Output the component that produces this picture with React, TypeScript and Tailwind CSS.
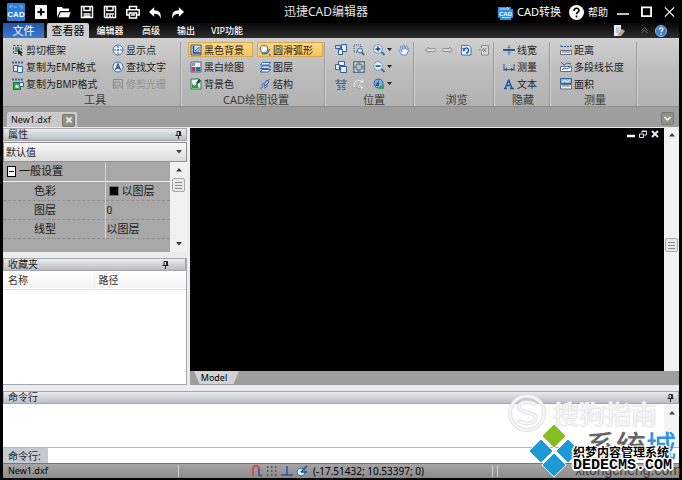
import { useState, type ReactNode } from "react"

type IconProps = { children: ReactNode; className?: string }

function Icon({ children, className = "w-3 h-3" }: IconProps) {
  return (
    <svg viewBox="0 0 12 12" className={`${className} shrink-0`} fill="none" stroke="#2a5faa" strokeWidth="1" aria-hidden="true">
      {children}
    </svg>
  )
}

const icons = {
  cutFrame: (
    <Icon>
      <path d="M1.5 1.5h8v8h-8z" stroke="#26406a" strokeDasharray="2 1.5" />
      <path d="M3 3h5v5H3z" fill="#3f9b6c" stroke="none" />
      <path d="M6 5l5 4-2 .3 1.5 2.4-1.4.3L7.6 9.7 6 11z" fill="#17243a" stroke="none" />
    </Icon>
  ),
  copyEmf: (
    <Icon>
      <path d="M0 1.5h11" stroke="#3c5f97" strokeWidth="2" strokeDasharray="2 1" />
      <path d="M1.5 4.5h5v6h-5z" fill="#dbe9fa" />
      <path d="M5.5 5.5h5v6h-5z" fill="#eef5ff" />
    </Icon>
  ),
  copyBmp: (
    <Icon>
      <path d="M0 1.5h11" stroke="#3c5f97" strokeWidth="2" strokeDasharray="2 1" />
      <path d="M1.5 4.5h7v7h-7z" fill="#36a552" stroke="#16763b" />
      <path d="M7.5 4.5h4v4h-4z" fill="#eef5ff" />
      <path d="M3.5 7v3h3V7z" fill="#e6f7e8" stroke="none" />
    </Icon>
  ),
  showPoint: (
    <Icon>
      <circle cx="6" cy="6" r="5" fill="#eef4fb" stroke="#476d98" />
      <path d="M6 2v2M6 8v2M2 6h2M8 6h2" />
      <circle cx="6" cy="6" r="1" fill="#234e90" stroke="none" />
    </Icon>
  ),
  findText: (
    <Icon>
      <circle cx="6" cy="6" r="5" fill="#eef4fb" stroke="#476d98" />
      <path d="M3.5 9L6 3l2.5 6M4.5 7h3" stroke="#1f4f9a" strokeWidth="1.3" />
    </Icon>
  ),
  trimRaster: (
    <Icon>
      <path d="M1.5 11V1.5h9V11M3 4h5v4H3zM8 8l3 3M2 10h5" stroke="#8b8b8b" />
    </Icon>
  ),
  blackBg: (
    <Icon>
      <path d="M1 1h10v10H1z" fill="#cddff1" stroke="#3c5674" />
      <path d="M3.5 2v7h7" stroke="#24415f" strokeWidth="1.5" />
      <path d="M5 7l4-4v4z" fill="#fff" stroke="#4272ad" />
    </Icon>
  ),
  blackWhite: (
    <Icon>
      <path d="M1 1h10v10H1z" fill="#f0f3f8" stroke="#52617b" />
      <path d="M1.5 6h4v4.5h-4z" fill="#b13a5b" stroke="none" />
      <path d="M6 6h4.5v4.5H6z" fill="#2f6f9a" stroke="none" />
      <path d="M2 2h3v3H2z" fill="#8396b5" stroke="none" />
    </Icon>
  ),
  bgColor: (
    <Icon>
      <path d="M1 1h8l2 2v8H1z" fill="#e4f4e6" stroke="#287946" />
      <path d="M2 10V5l2 3 3-3 2 5z" fill="#2b9a4c" stroke="none" />
      <path d="M6 5l3-4 2 2-3 3z" fill="#273f5f" stroke="none" />
    </Icon>
  ),
  arc: (
    <Icon>
      <circle cx="5" cy="5" r="3.8" fill="#fff" stroke="#52617b" />
      <path d="M3 9.500A5.500 5.500 0 0 0 10.500 5M10 10l1.500 1.500" stroke="#3574bd" strokeWidth="1.4" />
    </Icon>
  ),
  layers: (
    <Icon>
      <path d="M3.5 1.5h8l-2 2.5h-8zM3.5 5h8l-2 2.5h-8zM3.5 8.5h8l-2 2.5h-8z" fill="#eff6ff" />
    </Icon>
  ),
  structure: (
    <Icon>
      <path d="M1 10c2 1 3-1 2-3s3-2 3 0-2 3 0 3 3-3 2-5 2-3 3-4" stroke="#4673ad" />
      <path d="M5 6l3-4 2 2-4 4z" fill="#a4c4e9" />
    </Icon>
  ),
  copyView: (
    <Icon>
      <path d="M6.5 .5h5v7h-5z" fill="#e2effd" />
      <path d="M.5 1.5h5v3h-5z" fill="#c3dbf5" />
      <path d="M3.5 5.500h4v5h-4z" fill="#eaf3fe" stroke="#36567e" />
    </Icon>
  ),
  pageView: (
    <Icon>
      <path d="M3.5 .5h6v4h-6z" fill="#eef5ff" />
      <path d="M.5 3.5h4v5h-4zM5.5 5.5h6v6h-6z" fill="#dbe9f8" stroke="#385f8b" />
    </Icon>
  ),
  threeD: (
    <Icon>
      <path d="M0 3h12M3 1v5M9 1v5M1 5.500h10" stroke="#3b5f92" />
      <path d="M2 7.500h3v4H2M3 9.500h2M7.500 7.500H10M7.500 7.500v2H10v2H7" stroke="#3268a8" />
    </Icon>
  ),
  zoomArea: (
    <Icon>
      <path d="M1 1h7v7H1z" stroke="#344b70" strokeDasharray="1 1" />
      <circle cx="7" cy="6.500" r="2.5" fill="#deecfa" />
      <path d="M8.8 8.5l2.5 2.5" stroke="#344b70" strokeWidth="1.5" />
    </Icon>
  ),
  fit: (
    <Icon>
      <path d="M.5 .5h11v11H.5z" fill="#758d9a" stroke="#61727b" />
      <path d="M2 4.500V2h2.500M7.500 2H10v2.500M10 7.500V10H7.500M4.500 10H2V7.500" stroke="#edf5f7" />
      <path d="M4 4h4v4H4z" fill="#b4c0c6" stroke="none" />
    </Icon>
  ),
  rotate: (
    <Icon>
      <path d="M2 9a4 4 0 1 1 7-5M7 4h3V1M5 10h4M6 7l4 3" stroke="#f2f2f2" />
      <path d="M3 9a4 4 0 0 0 5 1" stroke="#969696" />
    </Icon>
  ),
  zoomIn: (
    <Icon>
      <circle cx="5" cy="5" r="4.300" fill="#e8f2fd" stroke="#6e97c6" />
      <path d="M2.500 5h5M5 2.500v5" stroke="#193f80" strokeWidth="1.5" />
      <path d="M8.5 8l3 3" strokeWidth="1.7" />
    </Icon>
  ),
  zoomOut: (
    <Icon>
      <circle cx="5" cy="5" r="4.300" fill="#e8f2fd" stroke="#6e97c6" />
      <path d="M2.500 5h5" stroke="#193f80" strokeWidth="1.5" />
      <path d="M8.5 8l3 3" strokeWidth="1.7" />
    </Icon>
  ),
  orbit: (
    <Icon>
      <circle cx="5.500" cy="5.500" r="4.5" fill="#86afd6" />
      <path d="M2 8l4-6v6z" fill="#245696" stroke="none" />
      <path d="M7 8l4-1v4H6z" fill="#35a44b" stroke="none" />
    </Icon>
  ),
  hand: (
    <Icon>
      <path d="M4 11L1 6.500c-.5-1 .8-1.300 1.500-.3L4 7.500 2.500 3c0-1 1.200-1.200 1.500 0l1 2.500L5 1.500c.3-1 1.300-.8 1.500 0L7 5l1-3c.5-.8 1.400-.3 1.200.5L8.800 6l1.200-1.500c.8-.5 1.300.2.900 1L8.500 11z" fill="#f3f8ff" stroke="#5f8cc4" />
    </Icon>
  ),
  back: (
    <Icon>
      <path d="M4.5 3L1.5 6l3 3V7.500H11v-3H4.5z" stroke="#929292" />
      <path d="M4 6h7" stroke="#eeeeee" />
    </Icon>
  ),
  forward: (
    <Icon>
      <path d="M7.5 3l3 3-3 3V7.500H1v-3h6.500z" stroke="#929292" />
      <path d="M1 6h7" stroke="#eeeeee" />
    </Icon>
  ),
  refreshPage: (
    <Icon>
      <path d="M1.5 1.5H9L11 3.500v7.500H1.500z" fill="#e8f1fd" stroke="#3a75bd" />
      <path d="M4 5.500c2-3 5-1 4.500 1.500C8.200 8.500 7 9 6 9" stroke="#215ca9" strokeWidth="1.5" />
      <path d="M2.5 3.500l.5 4 3-1.500z" fill="#215ca9" stroke="none" />
    </Icon>
  ),
  stopPage: (
    <Icon>
      <path d="M3.500 4V1.500h7v9.500h-7V8" fill="#d6d6d6" stroke="#8b8b8b" />
      <path d="M5 4l3 4M8 4L5 8M1 6h4" stroke="#777777" />
    </Icon>
  ),
  lineWidth: (
    <Icon>
      <path d="M0 6h12" stroke="#245696" strokeWidth="2" />
      <path d="M6 1v3M6 8v3M4.5 3L6 4.500 7.500 3M4.500 9L6 7.500 7.500 9" stroke="#4778b5" />
    </Icon>
  ),
  dimension: (
    <Icon>
      <path d="M1 3v7M11 3v7M1 8.500h10" stroke="#36567e" />
      <path d="M4 7L2 8.500 4 10M8 7l2 1.500L8 10" />
    </Icon>
  ),
  text: (
    <Icon>
      <path d="M1 10.500h3M7 10.500h4M2.500 10L5.500 2M5.500 1.500l3.500 9M3.800 7.500h4" stroke="#1d559e" strokeWidth="1.5" />
    </Icon>
  ),
  distance: (
    <Icon>
      <path d="M1 2.500h10M1 1v3M11 1v3" strokeDasharray="2 1" />
      <path d="M.5 6.500h11v4H.5z" fill="#f3f5f7" stroke="#5e6c7d" />
      <path d="M3 7v2M5 7v2M7 7v2M9 7v2" stroke="#5e6c7d" />
    </Icon>
  ),
  polyline: (
    <Icon>
      <path d="M1 1l3 3 3-2 4 1" />
      <path d="M.5 5.500h11v5H.5z" fill="#f3f5f7" stroke="#5e6c7d" />
      <path d="M2 9l2-2 3 1 3-2" />
    </Icon>
  ),
  area: (
    <Icon>
      <path d="M.5 .5h11v5H.5z" fill="#8eb4df" />
      <path d="M.5 6.500h11v4.500H.5z" fill="#f3f5f7" stroke="#5e6c7d" />
      <path d="M2 4l3-2 2 2 3-2" stroke="#fff" />
      <path d="M3 7v2M5 7v2M7 7v2M9 7v2" stroke="#5e6c7d" />
    </Icon>
  ),
}

type Command = { label: string; icon: ReactNode; active?: boolean; disabled?: boolean }

function CommandButton({ label, icon, active, disabled }: Command) {
  return (
    <button
      type="button"
      disabled={disabled}
      className={`flex items-center gap-[2px] h-[15px] pl-px pr-2 whitespace-nowrap border text-[10px] leading-[14px] ${
        active ? "border-[#d8a94c] bg-linear-to-b from-[#fbd68a] to-[#fcc559]" : "border-transparent"
      } ${disabled ? "text-[#929292]" : "text-[#1c1c1c]"}`}
    >
      {icon}
      {label}
    </button>
  )
}

function CommandColumn({ items, className = "" }: { items: Command[]; className?: string }) {
  return (
    <div className={`flex flex-col gap-[2px] ${className}`}>
      {items.map((c) => (
        <CommandButton key={c.label} {...c} />
      ))}
    </div>
  )
}

function IconButton({ label, icon, menu }: { label: string; icon: ReactNode; menu?: boolean }) {
  return (
    <button type="button" aria-label={label} className="flex items-center gap-[2px] h-[15px]">
      {icon}
      {menu && (
        <svg viewBox="0 0 5 3" className="w-[5px] h-[3px]" aria-hidden="true">
          <path d="M0 0h5L2.5 3z" fill="#222" />
        </svg>
      )}
    </button>
  )
}

function Group({ title, className, children }: { title: string; className: string; children: ReactNode }) {
  return (
    <section className={`flex flex-col shrink-0 border-r border-[#9b9b9b] shadow-[1px_0_0_#d2d2d2] ${className}`}>
      <div className="flex flex-1 items-start">{children}</div>
      <h2 className="text-center text-[11px] leading-3 text-[#3a3a3a]">{title}</h2>
    </section>
  )
}

function Pin() {
  return (
    <svg viewBox="0 0 7 8" className="w-[7px] h-2" fill="none" stroke="#222" aria-hidden="true">
      <path d="M2 .5h3.500V4.500M2 .5v4M4.500 1v3.500M.5 4.500h6M3.500 5v3" />
    </svg>
  )
}

function PanelHeader({ title, pinClass = "pr-1" }: { title: string; pinClass?: string }) {
  return (
    <header
      className={`flex items-center justify-between shrink-0 h-[13px] pl-1 border border-[#a4a7ad] bg-linear-to-b from-[#e9ecf0] to-[#b9bec6] ${pinClass}`}
    >
      <h2 className="text-[10px] leading-[11px] text-[#222]">{title}</h2>
      <button type="button" aria-label={`固定${title}`}>
        <Pin />
      </button>
    </header>
  )
}

function Arrow({ up }: { up?: boolean }) {
  return (
    <svg viewBox="0 0 6 4" className="w-[6px] h-1" aria-hidden="true">
      <path d={up ? "M0 3.5h6L3 0z" : "M0 0h6L3 3.5z"} fill="#3d3d3d" />
    </svg>
  )
}

function Thumb() {
  return (
    <div className="flex flex-col items-center justify-center gap-[2px] w-[13px] h-[14px] rounded-xs border border-[#a9a9a9] bg-[#e8e8e8]">
      <span className="w-[7px] h-px bg-[#8a8a8a]" />
      <span className="w-[7px] h-px bg-[#8a8a8a]" />
      <span className="w-[7px] h-px bg-[#8a8a8a]" />
    </div>
  )
}

const drawTools: Command[] = [
  { label: "剪切框架", icon: icons.cutFrame },
  { label: "复制为EMF格式", icon: icons.copyEmf },
  { label: "复制为BMP格式", icon: icons.copyBmp },
]
const findTools: Command[] = [
  { label: "显示点", icon: icons.showPoint },
  { label: "查找文字", icon: icons.findText },
  { label: "修剪光栅", icon: icons.trimRaster, disabled: true },
]
const colorSettings: Command[] = [
  { label: "黑色背景", icon: icons.blackBg, active: true },
  { label: "黑白绘图", icon: icons.blackWhite },
  { label: "背景色", icon: icons.bgColor },
]
const shapeSettings: Command[] = [
  { label: "圆滑弧形", icon: icons.arc, active: true },
  { label: "图层", icon: icons.layers },
  { label: "结构", icon: icons.structure },
]
const hideTools: Command[] = [
  { label: "线宽", icon: icons.lineWidth },
  { label: "测量", icon: icons.dimension },
  { label: "文本", icon: icons.text },
]
const measureTools: Command[] = [
  { label: "距离", icon: icons.distance },
  { label: "多段线长度", icon: icons.polyline },
  { label: "面积", icon: icons.area },
]

function TitleBar() {
  return (
    <header className="flex items-center justify-between h-[23px] pt-px px-1 text-white">
      <div className="flex flex-1 items-center gap-[9px]">
        <svg viewBox="0 0 18 18" className="w-[18px] h-[18px]" aria-label="CAD">
          <rect width="18" height="18" rx="1" fill="#2c7fd8" />
          <path d="M3 5V3h3M12 3h3v3M7 4h3" stroke="#8cc1f4" fill="none" />
          <text x="9" y="14" textAnchor="middle" fontSize="8" fontWeight="bold" fill="#fff" fontFamily="Liberation Sans, sans-serif">CAD</text>
        </svg>
        <button type="button" aria-label="新建">
          <svg viewBox="0 0 14 14" className="w-[14px] h-[14px]" fill="none" stroke="#fff" strokeWidth="2">
            <path d="M2 1h10v12H2z" fill="#eee" />
            <path d="M7 3.500v7M3.500 7h7" stroke="#111" />
          </svg>
        </button>
        <button type="button" aria-label="打开">
          <svg viewBox="0 0 14 14" className="w-[14px] h-[14px]" fill="#fff">
            <path d="M0 12V2h5l1 1.500h6V6H3z" />
            <path d="M3.500 7H14l-2 5.500H1z" stroke="#000" strokeWidth=".5" />
          </svg>
        </button>
        <button type="button" aria-label="保存">
          <svg viewBox="0 0 14 14" className="w-[14px] h-[14px]" fill="none" stroke="#fff" strokeWidth="1.5">
            <path d="M1.500 1.500h11v11h-11zM4 1.500v4h6v-4M3.500 9h7M3.500 11h7" />
          </svg>
        </button>
        <button type="button" aria-label="另存为">
          <svg viewBox="0 0 14 14" className="w-[14px] h-[14px]" fill="none" stroke="#fff" strokeWidth="1.5">
            <path d="M1.500 12.500v-11h11v11H1.500M4 1.500v4h6v-4M3 9h8" />
            <path d="M3 11h7" strokeDasharray="2 1" />
          </svg>
        </button>
        <button type="button" aria-label="打印">
          <svg viewBox="0 0 14 14" className="w-[14px] h-[14px]" fill="none" stroke="#fff" strokeWidth="1.5">
            <path d="M3.500 4V1.500h7V4M3 10H.8V4.800h12.400V10H11M3.500 8h7v5h-7zM5 10h4" />
          </svg>
        </button>
        <button type="button" aria-label="撤销">
          <svg viewBox="0 0 14 14" className="w-[13px] h-[14px]" fill="#fff">
            <path d="M0 7l5.500-5v3C11 5 13.500 8 12.500 14 11.500 10.500 9 9 5.500 9v3z" />
          </svg>
        </button>
        <button type="button" aria-label="重做">
          <svg viewBox="0 0 14 14" className="w-[13px] h-[14px]" fill="#fff">
            <path d="M14 7L8.500 2v3C3 5 .5 8 1.500 14 2.500 10.500 5 9 8.500 9v3z" />
          </svg>
        </button>
      </div>
      <h1 className="mr-[30px] text-[12px] leading-5 text-[#e4e4e4] whitespace-nowrap">迅捷CAD编辑器</h1>
      <div className="flex flex-1 items-center justify-end">
        <button type="button" className="flex items-center gap-1 pr-2 text-[11px] leading-4 whitespace-nowrap">
          <svg viewBox="0 0 15 15" className="w-[15px] h-[15px]" aria-hidden="true">
            <path d="M0 2h13v2h2v9h-2v2H2v-2H0z" fill="#2b93e6" />
            <path d="M2 4h9M11 4l-2-2M4 12.500h9" stroke="#bfe0fb" fill="none" />
            <text x="7.500" y="11" textAnchor="middle" fontSize="6" fontWeight="bold" fill="#fff" fontFamily="Liberation Sans, sans-serif">CAD</text>
          </svg>
          CAD转换
        </button>
        <button type="button" className="flex items-center gap-1 pr-[9px] text-[10px] leading-4 whitespace-nowrap">
          <svg viewBox="0 0 15 15" className="w-[15px] h-[15px]" aria-hidden="true">
            <circle cx="7.500" cy="7.500" r="7.5" fill="#fff" />
            <path d="M5 6c0-3.500 5-3.500 5-.5C10 7.500 7.500 7 7.500 9.300M7.500 10.500v2" stroke="#000" strokeWidth="1.6" fill="none" />
          </svg>
          帮助
        </button>
        <div className="flex items-center gap-3">
          <button type="button" aria-label="最小化">
            <svg viewBox="0 0 12 12" className="w-[12px] h-[12px]" stroke="#fff" strokeWidth="1.5"><path d="M0 8h12" /></svg>
          </button>
          <button type="button" aria-label="最大化">
            <svg viewBox="0 0 12 12" className="w-[11px] h-[12px]" stroke="#fff" strokeWidth="2" fill="none"><path d="M1 1h10v9.500H1z" /></svg>
          </button>
          <button type="button" aria-label="关闭">
            <svg viewBox="0 0 12 12" className="w-[11px] h-[12px]" stroke="#fff" strokeWidth="1.3"><path d="M1 1l10 10M11 1L1 11" /></svg>
          </button>
        </div>
      </div>
    </header>
  )
}

function RibbonTabs() {
  const [tab, setTab] = useState("查看器")
  const tabs = [
    { name: "编辑器", width: "w-[42px]" },
    { name: "高级", width: "w-[40px]" },
    { name: "输出", width: "w-[30px]" },
    { name: "VIP功能", width: "w-[52px]" },
  ]
  return (
    <nav className="flex items-stretch h-[15px] bg-linear-to-b from-[#080808] to-[#2e2e2e]">
      <button type="button" className="w-[41px] bg-linear-to-b from-[#2456a8] to-[#3b7bd0] text-[11px] leading-3 text-white">
        文件
      </button>
      <button
        type="button"
        onClick={() => setTab("查看器")}
        className="w-[42px] ml-[3px] rounded-t-xs bg-[#cfcfcf] text-[11px] leading-[14px] text-black"
      >
        查看器
      </button>
      {tabs.map((t) => (
        <button
          key={t.name}
          type="button"
          aria-pressed={tab === t.name}
          onClick={() => setTab(t.name)}
          className={`${t.width} text-[9px] leading-[14px] font-medium text-white whitespace-nowrap`}
        >
          {t.name}
        </button>
      ))}
      <div className="flex items-center ml-auto pr-3">
        <button type="button" aria-label="样式" className="mr-4">
          <svg viewBox="0 0 12 12" className="w-[12px] h-[12px]" aria-hidden="true">
            <path d="M1 0h7v11H1z" fill="#e9eff5" />
            <path d="M3 3h4M3 5h4M3 7h3" stroke="#86a7ca" />
            <path d="M4 10l5-6 3 2-4 5z" fill="#c9a483" />
          </svg>
        </button>
        <button type="button" aria-label="折叠功能区" className="mr-[7px]">
          <svg viewBox="0 0 7 7" className="w-[7px] h-[7px]" fill="none" stroke="#777">
            <path d="M.5 3.500l3-3 3 3M.5 6l3-3 3 3" />
          </svg>
        </button>
        <button type="button" aria-label="帮助">
          <svg viewBox="0 0 12 12" className="w-[12px] h-[12px]">
            <circle cx="6" cy="6" r="5.5" fill="#3e7fc9" stroke="#8db9e6" />
            <path d="M4.200 4.800c0-2.500 3.600-2.500 3.600-.3C7.800 6 6 5.700 6 7.300M6 8.300v1.400" stroke="#fff" strokeWidth="1.3" fill="none" />
          </svg>
        </button>
      </div>
    </nav>
  )
}

function Ribbon() {
  return (
    <div className="flex h-[69px] pt-1 border-b border-[#8d8d8d] bg-linear-to-b from-[#d0d0d0] via-[#bcbcbc] to-[#b2b2b2] overflow-hidden">
      <Group title="工具" className="w-[178px] pl-[7px]">
        <CommandColumn items={drawTools} className="w-[100px]" />
        <CommandColumn items={findTools} />
      </Group>
      <Group title="CAD绘图设置" className="w-[144px] pl-[7px]">
        <CommandColumn items={colorSettings} className="w-[65px] mr-1" />
        <CommandColumn items={shapeSettings} className="w-[66px]" />
      </Group>
      <Group title="位置" className="w-[89px] pl-[10px]">
        <div className="flex flex-col gap-[2px] mr-[6px]">
          <IconButton label="复制视图" icon={icons.copyView} />
          <IconButton label="页面视图" icon={icons.pageView} />
          <IconButton label="三维视图" icon={icons.threeD} />
        </div>
        <div className="flex flex-col gap-[2px] mr-2">
          <IconButton label="缩放区域" icon={icons.zoomArea} />
          <IconButton label="适合窗口" icon={icons.fit} />
          <IconButton label="旋转" icon={icons.rotate} />
        </div>
        <div className="flex flex-col gap-[2px] mr-[6px]">
          <IconButton label="放大" icon={icons.zoomIn} menu />
          <IconButton label="缩小" icon={icons.zoomOut} menu />
          <IconButton label="动态观察" icon={icons.orbit} menu />
        </div>
        <IconButton label="平移" icon={icons.hand} />
      </Group>
      <Group title="浏览" className="w-[80px] pl-[10px] pr-1">
        <div className="flex gap-[6px]">
          <IconButton label="后退" icon={icons.back} />
          <IconButton label="前进" icon={icons.forward} />
          <IconButton label="刷新" icon={icons.refreshPage} />
          <IconButton label="停止" icon={icons.stopPage} />
        </div>
      </Group>
      <Group title="隐藏" className="w-[56px] pl-[7px] pr-1">
        <CommandColumn items={hideTools} />
      </Group>
      <Group title="测量" className="w-[87px] pl-2 pr-1">
        <CommandColumn items={measureTools} />
      </Group>
    </div>
  )
}

function PropertiesPanel() {
  const rows = [
    { name: "色彩", value: "以图层", swatch: true },
    { name: "图层", value: "0" },
    { name: "线型", value: "以图层" },
  ]
  return (
    <section className="flex flex-col">
      <PanelHeader title="属性" />
      <div className="relative flex mt-px">
        <select
          aria-label="属性集"
          className="w-full h-5 pl-[2px] appearance-none border border-[#8f8f8f] bg-linear-to-b from-[#f8f8f8] to-[#dcdcdc] text-[10px] leading-4 text-[#1c1c1c]"
        >
          <option>默认值</option>
        </select>
        <span className="absolute right-[5px] top-2 flex pointer-events-none">
          <Arrow />
        </span>
      </div>
      <div className="flex">
        <table className="flex-1 border-collapse bg-[#a8a8a8] text-[11px] leading-4 text-[#1a1a1a] table-fixed">
          <colgroup>
            <col className="w-[102px]" />
            <col />
          </colgroup>
          <tbody>
            <tr className="h-[19px] border-b border-[#ededed]">
              <th scope="rowgroup" className="p-0 pl-1 font-normal text-left border-r border-[#d8d8d8]">
                <button type="button" className="flex items-center gap-[3px]">
                  <span className="flex items-center justify-center w-[9px] h-[11px] border border-black bg-white">
                    <span className="w-[5px] h-px bg-black" />
                  </span>
                  一般设置
                </button>
              </th>
              <td />
            </tr>
            {rows.map((r) => (
              <tr key={r.name} className="h-[19px] border-b border-dashed border-[#8d8d8d]">
                <th scope="row" className="p-0 pl-[31px] font-normal text-left border-r border-solid border-r-[#d8d8d8]">
                  {r.name}
                </th>
                <td className="p-0 pl-px">
                  <div className={`flex items-center gap-[3px] ${r.swatch ? "pl-[2px]" : r.value === "0" ? "text-[10px]" : ""}`}>
                    {r.swatch && <span className="w-[10px] h-[10px] border border-[#777] bg-black" />}
                    {r.value}
                  </div>
                </td>
              </tr>
            ))}
            <tr className="h-[14px]">
              <td />
              <td />
            </tr>
          </tbody>
        </table>
        <div className="flex flex-col items-center w-[17px] pt-[6px] pb-[6px] bg-[#f1f1f1]">
          <Arrow up />
          <div className="mt-[6px] mb-auto">
            <Thumb />
          </div>
          <Arrow />
        </div>
      </div>
    </section>
  )
}

function FavoritesPanel() {
  return (
    <section className="flex flex-col flex-1 mt-[6px] border-b border-r border-[#a4a7ad] bg-white">
      <PanelHeader title="收藏夹" pinClass="pr-4" />
      <table className="w-full text-[10px] leading-4 text-[#333]">
        <thead>
          <tr className="h-[18px] border-b border-[#e2e2e2] bg-linear-to-b from-white to-[#f4f4f4]">
            <th className="w-[91px] p-0 pl-[5px] text-left font-normal border-r border-[#eeeeee]">名称</th>
            <th className="p-0 pl-1 text-left font-normal">路径</th>
          </tr>
        </thead>
      </table>
    </section>
  )
}

function Workspace() {
  return (
    <div className="flex flex-1 pt-px bg-[#ececec]">
      <aside className="flex flex-col w-[184px] shrink-0">
        <PropertiesPanel />
        <FavoritesPanel />
      </aside>
      <main className="flex flex-col flex-1 ml-[3px]">
        <div className="flex flex-1">
          <div className="flex-1 bg-black">
            <div className="flex justify-end gap-1 pt-[2px] pr-[5px]">
              <button type="button" aria-label="最小化文档">
                <svg viewBox="0 0 8 8" className="w-2 h-2"><path d="M0 6h8" stroke="#fff" strokeWidth="2.5" /></svg>
              </button>
              <button type="button" aria-label="还原文档">
                <svg viewBox="0 0 8 8" className="w-2 h-2" fill="none" stroke="#dde4f2"><path d="M.5 4h4v3.500h-4zM3 3V1h4.500v4H5M3 1.500h4" /></svg>
              </button>
              <button type="button" aria-label="关闭文档">
                <svg viewBox="0 0 8 8" className="w-2 h-2" stroke="#e6eaf2" strokeWidth="2"><path d="M1 1l6 6M7 1L1 7" /></svg>
              </button>
            </div>
          </div>
          <div className="flex flex-col items-center w-[15px] pt-[5px] bg-[#f1f1f1]">
            <Arrow up />
            <div className="mt-[101px]">
              <Thumb />
            </div>
          </div>
        </div>
        <div className="flex h-[14px] pl-1 bg-[#9e9e9e]">
          <button type="button" className="w-[45px] h-[13px] pr-[5px] bg-[#d3d3d3] [clip-path:polygon(0_0,100%_0,88%_100%,12%_100%)] text-[9px] leading-[14px] text-black">
            Model
          </button>
        </div>
      </main>
    </div>
  )
}

function CommandPanel() {
  return (
    <section className="flex flex-col pt-[6px] bg-[#e9ebee]">
      <PanelHeader title="命令行" />
      <div className="flex justify-end h-[43px] bg-white">
        <div className="flex flex-col items-center w-[15px] pt-[7px] bg-[#f4f4f4]">
          <Arrow up />
        </div>
      </div>
      <div className="flex h-4 border-t border-[#a9b9bd] bg-white">
        <label htmlFor="command" className="w-[45px] pl-[5px] bg-[#c5c9d2] text-[10px] leading-[16px] text-[#222]">
          命令行:
        </label>
        <input id="command" type="text" className="flex-1 min-w-0 px-1 text-[10px] leading-[15px] outline-none" />
      </div>
    </section>
  )
}

function StatusBar() {
  return (
    <footer className="flex items-center h-[15px] pl-[5px] border-t border-[#777] bg-linear-to-b from-[#a5a5a5] to-[#8c8c8c] text-[10px] leading-[14px] text-black">
      <span className="w-[170px] text-[9px]">New1.dxf</span>
      <span className="w-px h-3 bg-[#d0d0d0] mr-[72px]" />
      <div className="flex items-center gap-[3px] mr-[5px]">
        <button type="button" aria-label="捕捉">
          <Icon>
            <path d="M2 11V4c0-4 6-4 6 0v7" stroke="#c64e58" strokeWidth="2" />
            <path d="M8 4v6l3 1" stroke="#365eae" strokeWidth="1.5" />
          </Icon>
        </button>
        <button type="button" aria-label="网格">
          <Icon>
            <path d="M1 2h10M1 6h10M1 10h10" stroke="#444" strokeDasharray="1.5 2.5" strokeWidth="1.5" />
          </Icon>
        </button>
        <button type="button" aria-label="正交">
          <Icon>
            <path d="M6 1v9M0 10h12" stroke="#2859a1" strokeWidth="1.5" />
          </Icon>
        </button>
        <button type="button" aria-label="极轴">
          <Icon>
            <circle cx="5" cy="7" r="4" fill="#d8e7f6" stroke="#3b6fa9" />
            <path d="M5 7l6-6M5 7h6" stroke="#1f4e8d" strokeWidth="1.5" />
          </Icon>
        </button>
      </div>
      <span className="whitespace-nowrap">(-17.51432; 10.53397; 0)</span>
      <span className="w-px h-3 ml-auto mr-1 bg-[#d0d0d0]" />
      <span className="w-px h-3 mr-[181px] bg-[#d0d0d0]" />
    </footer>
  )
}

// site marks stacked over the lower right corner
function Watermarks() {
  return (
    <div className="absolute right-0 bottom-0 w-[180px] h-[90px] overflow-hidden pointer-events-none">
      <svg viewBox="0 0 180 90" className="absolute inset-0" fill="none" aria-hidden="true">
        <circle cx="25" cy="23" r="17" stroke="#e2e3e5" strokeWidth="4" />
        <path d="M34 15c-5-4-17-4-17 2s17 5 17 11-13 7-18 2" stroke="#e2e3e5" strokeWidth="4" />
        <circle cx="25" cy="23" r="17" stroke="#f6f6f7" strokeWidth="2" />
        <path d="M34 15c-5-4-17-4-17 2s17 5 17 11-13 7-18 2" stroke="#f6f6f7" strokeWidth="2" />
      </svg>
      <span className="absolute left-[51px] top-[9px] text-[26px] leading-[30px] text-[#f6f6f7] whitespace-nowrap [text-shadow:1px_0_0_#e2e3e5,-1px_0_0_#e2e3e5,0_1px_0_#e2e3e5]">搜狗指南</span>
      <span className="absolute left-[84px] top-[35px] text-[30px] leading-[42px] font-medium text-[#666] whitespace-nowrap">
        系统<span className="text-[#2c96df]">城</span>
      </span>
      <span className="absolute left-[73px] top-[73px] font-[Liberation_Sans] text-[14px] leading-[14px] text-[#3c3c3c] whitespace-nowrap">xitongcheng.com</span>
      <svg viewBox="0 0 180 90" className="absolute inset-0" aria-hidden="true">
        <g stroke="#fff" strokeWidth="1">
          <path d="M52 34l12 12-12 12-12-12z" fill="#85bd24" />
          <path d="M39 49l12 12-12 12-12-12z" fill="#1d9ad6" />
          <path d="M66 49l12 12-12 12-12-12z" fill="#1d9ad6" />
          <path d="M52 63l12 12-12 12-12-12z" fill="#1d9ad6" />
        </g>
      </svg>
      <div className="absolute left-[71px] top-[56px] text-black whitespace-nowrap [text-shadow:1px_1px_0_#fff,-1px_-1px_0_#fff,1px_-1px_0_#fff,-1px_1px_0_#fff,0_2px_0_#fff,2px_0_0_#fff,-2px_0_0_#fff]">
        <p className="text-[12px] leading-[14px] font-bold">织梦内容管理系统</p>
        <p className="font-[Liberation_Mono] text-[15px] leading-[12px] font-bold">DEDECMS.COM</p>
      </div>
    </div>
  )
}

export default function App() {
  return (
    <div className="relative flex flex-col min-h-screen px-[3px] pb-[2px] bg-black font-['Noto_Sans','Noto_Sans_CJK_SC',sans-serif] overflow-hidden">
      <TitleBar />
      <RibbonTabs />
      <Ribbon />
      <div className="flex items-end justify-between h-[20px] pl-1 pr-[5px] bg-[#9e9e9e]">
        <div className="flex items-center justify-between w-[70px] h-[15px] pl-[3px] pr-px rounded-t-xs border border-b-0 border-[#cfcfcf] bg-[#c9c9c9]">
          <button type="button" className="text-[9px] leading-[14px] text-[#111]">New1.dxf</button>
          <button type="button" aria-label="关闭 New1.dxf" className="flex items-center justify-center w-[13px] h-[13px] rounded-xs border border-[#777a70] bg-[#8f9287]">
            <svg viewBox="0 0 6 6" className="w-[6px] h-[6px]" stroke="#fff" strokeWidth="1.5"><path d="M.5 .5l5 5M5.500 .5l-5 5" /></svg>
          </button>
        </div>
        <button type="button" aria-label="文档列表" className="flex items-center justify-center w-[13px] h-[13px] mb-[2px] rounded-xs border border-[#777a70] bg-[#8f9287]">
          <svg viewBox="0 0 7 6" className="w-[7px] h-[6px]" fill="none" stroke="#fff" strokeWidth="1.5"><path d="M.5 1l3 3 3-3" /></svg>
        </button>
      </div>
      <Workspace />
      <CommandPanel />
      <StatusBar />
      <Watermarks />
    </div>
  )
}
